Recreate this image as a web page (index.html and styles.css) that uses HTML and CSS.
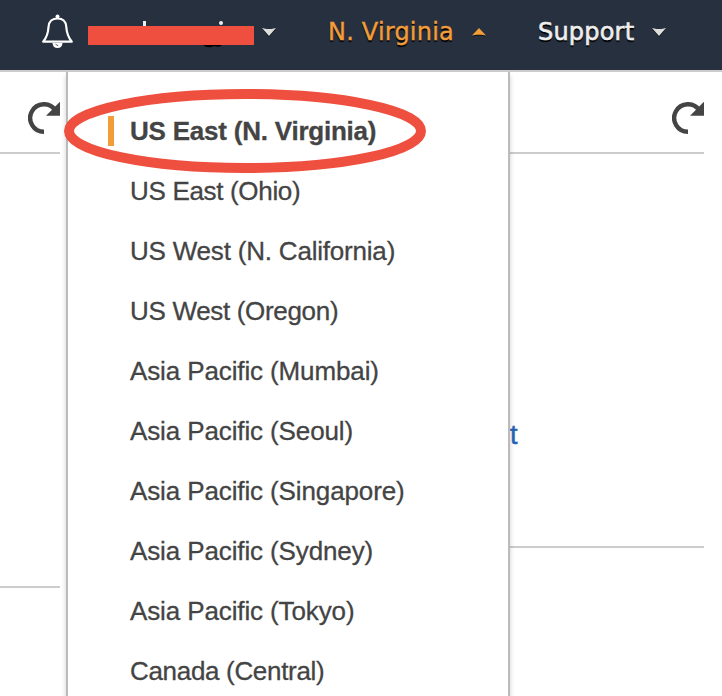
FILE: index.html
```html
<!DOCTYPE html>
<html lang="en">
<head>
<meta charset="utf-8">
<title>Region selector</title>
<link rel="stylesheet" href="styles.css">
</head>
<body>
<header class="topbar">
  <svg class="bell" width="34" height="36" viewBox="0 0 34 36">
    <path d="M11.5 29 Q11.8 34 16.5 34 Q21.3 34 21.5 29Z" fill="#fff"/>
    <path d="M2.2 27.7 C6 23 7.2 20 7.5 13 C7.8 7.5 11.5 4.5 16.5 4.5 C21.5 4.5 25 7.5 25.3 13 C25.7 20 27 23 30.8 27.7Z" fill="#27303f" stroke="#fff" stroke-width="2.2" stroke-linejoin="round"/>
    <circle cx="16.5" cy="2.6" r="2" fill="#fff"/>
    <path d="M14.5 30.2 L17.2 31.8" stroke="#27303f" stroke-width=".8"/>
  </svg>
  <svg class="account" width="166" height="28" viewBox="0 0 166 28">
    <path d="M55 1h3v6h-3zM131 3q0-2 2-2t2 2-2 2-2-2z" fill="#eee"/>
    <path d="M115 25h19q-2 3-8 1-6 3-11-1z" fill="#000"/>
    <path d="M0 6h166v19H0z" fill="#ee4f3e"/>
  </svg>
  <svg class="caret caret-account" width="14" height="9" viewBox="0 0 14 9"><path d="M0 0l4.5 1h5L14 0 7 8Z" fill="#ddd"/></svg>
  <span class="nav region">N. Virginia</span>
  <svg class="caret caret-region" width="14" height="9" viewBox="0 0 14 9"><path d="M7 0l7 7.5-4.5-.8h-5L0 7.5Z" fill="#f29d38"/></svg>
  <span class="nav support">Support</span>
  <svg class="caret caret-support" width="14" height="9" viewBox="0 0 14 9"><path d="M0 0l4.5 1h5L14 0 7 8Z" fill="#ddd"/></svg>
</header>
<main class="content">
  <section class="left">
    <div class="panel-head">
      <svg width="32" height="32" viewBox="0 0 32 32"><path d="M16 29.8A13.8 13.8 0 1 1 27.5 8.4" fill="none" stroke="#444" stroke-width="4.4"/><path d="M18 13.7L32 -.3V13.7Z" fill="#444"/></svg>
    </div>
    <div class="panel-body"></div>
  </section>
  <ul class="menu">
    <li class="current"><span>US East (N. Virginia)</span></li>
    <li>US East (Ohio)</li>
    <li class="california">US West (N. California)</li>
    <li>US West (Oregon)</li>
    <li class="asia">Asia Pacific (Mumbai)</li>
    <li class="asia">Asia Pacific (Seoul)</li>
    <li class="asia">Asia Pacific (Singapore)</li>
    <li class="asia">Asia Pacific (Sydney)</li>
    <li class="asia">Asia Pacific (Tokyo)</li>
    <li>Canada (Central)</li>
  </ul>
  <section class="right">
    <div class="panel-head">
      <svg width="32" height="32" viewBox="0 0 32 32"><path d="M16 29.8A13.8 13.8 0 1 1 27.5 8.4" fill="none" stroke="#444" stroke-width="4.4"/><path d="M18 13.7L32 -.3V13.7Z" fill="#444"/></svg>
    </div>
    <div class="panel-body"><a class="link">t</a></div>
  </section>
  <svg class="highlight" width="362" height="84" viewBox="0 0 362 84"><ellipse cx="181" cy="42" rx="176" ry="37" fill="none" stroke="#ee4f3e" stroke-width="10"/></svg>
</main>
</body>
</html>
```
FILE: styles.css
```css
* { box-sizing: border-box; }
body {
  margin: 0;
  height: 696px;
  overflow: hidden;
  background: #fff;
  color: #444;
  font-family: "Liberation Sans", Helvetica, Arial, sans-serif;
}
svg { display: block; flex: none; }
.topbar {
  display: flex;
  align-items: flex-start;
  height: 72px;
  padding-left: 41px;
  background: #27303f;
  border-bottom: 2px solid #ccc;
}
.bell { margin-top: 14px; }
.account { margin: 20px 0 0 13px; }
.caret { margin-top: 28px; filter: drop-shadow(0 1px 0 #111); }
.caret-account { margin-left: 8px; }
.nav {
  flex: none;
  margin-top: 18px;
  font: 24px/28px "DejaVu Sans", Verdana, sans-serif;
  white-space: nowrap;
  text-shadow: 0 2px 1px #000;
}
.region {
  width: 144px;
  margin-left: 52px;
  color: #f29d38;
  letter-spacing: .2px;
  -webkit-text-stroke: .4px #f29d38;
}
.support {
  width: 114px;
  margin-left: 52px;
  color: #eee;
  letter-spacing: .2px;
  -webkit-text-stroke: .6px #eee;
}
.content {
  position: relative;
  display: grid;
  grid-template-columns: 60px 444px 188px;
  column-gap: 6px;
  height: 624px;
}
.right { margin-left: -6px; }
.panel-head {
  display: flex;
  justify-content: flex-end;
  height: 82px;
  padding-top: 30px;
  border-bottom: 2px solid #ccc;
}
.left .panel-body { height: 434px; border-bottom: 2px solid #ccc; }
.right .panel-body { height: 394px; padding-top: 266px; border-bottom: 2px solid #ccc; }
.link { display: block; font-size: 27px; line-height: 30px; color: #2663b5; -webkit-text-stroke: .5px #2663b5; }
.menu {
  z-index: 1;
  height: 640px;
  margin: 0;
  padding: 29px 0 0 62px;
  list-style: none;
  background: #fff;
  border: solid #bbb;
  border-width: 0 2px;
  box-shadow: 0 4px 5px rgba(0, 0, 0, .2);
  font-size: 26px;
  letter-spacing: -.32px;
  -webkit-text-stroke: .3px #444;
}
.menu li { height: 60px; line-height: 60px; white-space: nowrap; }
.menu .california { letter-spacing: -.2px; }
.menu .asia { letter-spacing: -.12px; }
.menu .current {
  display: flex;
  align-items: center;
  margin-left: -22px;
  font-weight: bold;
  letter-spacing: -.22px;
}
.current::before { content: ""; width: 6px; height: 30px; margin-right: 16px; background: #f29d38; }
.highlight { position: absolute; z-index: 2; left: 64px; top: 17px; }
```
